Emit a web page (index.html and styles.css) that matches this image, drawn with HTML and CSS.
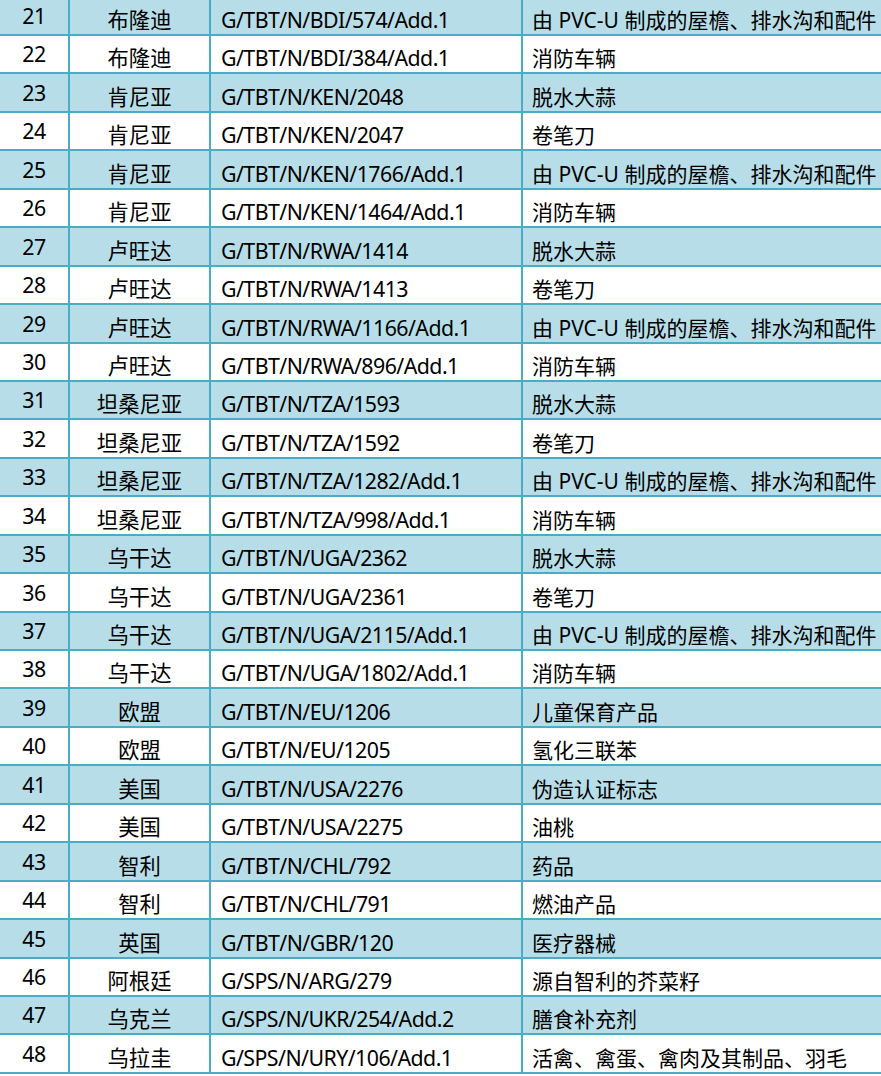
FILE: index.html
```html
<!DOCTYPE html>
<html lang="zh-CN">
<head>
<meta charset="utf-8">
<title>通报列表</title>
<link rel="stylesheet" href="styles.css">
</head>
<body>
<div class="sheet">
<table class="grid">
<colgroup><col class="c-no"><col class="c-member"><col class="c-symbol"><col class="c-product"></colgroup>
<tbody>
<tr class="alt"><td class="no">21</td><td class="member">布隆迪</td><td class="symbol">G/TBT/N/BDI/574/Add.1</td><td class="product">由 PVC-U 制成的屋檐、排水沟和配件</td></tr>
<tr><td class="no">22</td><td class="member">布隆迪</td><td class="symbol">G/TBT/N/BDI/384/Add.1</td><td class="product">消防车辆</td></tr>
<tr class="alt"><td class="no">23</td><td class="member">肯尼亚</td><td class="symbol">G/TBT/N/KEN/2048</td><td class="product">脱水大蒜</td></tr>
<tr><td class="no">24</td><td class="member">肯尼亚</td><td class="symbol">G/TBT/N/KEN/2047</td><td class="product">卷笔刀</td></tr>
<tr class="alt"><td class="no">25</td><td class="member">肯尼亚</td><td class="symbol">G/TBT/N/KEN/1766/Add.1</td><td class="product">由 PVC-U 制成的屋檐、排水沟和配件</td></tr>
<tr><td class="no">26</td><td class="member">肯尼亚</td><td class="symbol">G/TBT/N/KEN/1464/Add.1</td><td class="product">消防车辆</td></tr>
<tr class="alt"><td class="no">27</td><td class="member">卢旺达</td><td class="symbol">G/TBT/N/RWA/1414</td><td class="product">脱水大蒜</td></tr>
<tr><td class="no">28</td><td class="member">卢旺达</td><td class="symbol">G/TBT/N/RWA/1413</td><td class="product">卷笔刀</td></tr>
<tr class="alt"><td class="no">29</td><td class="member">卢旺达</td><td class="symbol">G/TBT/N/RWA/1166/Add.1</td><td class="product">由 PVC-U 制成的屋檐、排水沟和配件</td></tr>
<tr><td class="no">30</td><td class="member">卢旺达</td><td class="symbol">G/TBT/N/RWA/896/Add.1</td><td class="product">消防车辆</td></tr>
<tr class="alt"><td class="no">31</td><td class="member">坦桑尼亚</td><td class="symbol">G/TBT/N/TZA/1593</td><td class="product">脱水大蒜</td></tr>
<tr><td class="no">32</td><td class="member">坦桑尼亚</td><td class="symbol">G/TBT/N/TZA/1592</td><td class="product">卷笔刀</td></tr>
<tr class="alt"><td class="no">33</td><td class="member">坦桑尼亚</td><td class="symbol">G/TBT/N/TZA/1282/Add.1</td><td class="product">由 PVC-U 制成的屋檐、排水沟和配件</td></tr>
<tr><td class="no">34</td><td class="member">坦桑尼亚</td><td class="symbol">G/TBT/N/TZA/998/Add.1</td><td class="product">消防车辆</td></tr>
<tr class="alt"><td class="no">35</td><td class="member">乌干达</td><td class="symbol">G/TBT/N/UGA/2362</td><td class="product">脱水大蒜</td></tr>
<tr><td class="no">36</td><td class="member">乌干达</td><td class="symbol">G/TBT/N/UGA/2361</td><td class="product">卷笔刀</td></tr>
<tr class="alt"><td class="no">37</td><td class="member">乌干达</td><td class="symbol">G/TBT/N/UGA/2115/Add.1</td><td class="product">由 PVC-U 制成的屋檐、排水沟和配件</td></tr>
<tr><td class="no">38</td><td class="member">乌干达</td><td class="symbol">G/TBT/N/UGA/1802/Add.1</td><td class="product">消防车辆</td></tr>
<tr class="alt"><td class="no">39</td><td class="member">欧盟</td><td class="symbol">G/TBT/N/EU/1206</td><td class="product">儿童保育产品</td></tr>
<tr><td class="no">40</td><td class="member">欧盟</td><td class="symbol">G/TBT/N/EU/1205</td><td class="product">氢化三联苯</td></tr>
<tr class="alt"><td class="no">41</td><td class="member">美国</td><td class="symbol">G/TBT/N/USA/2276</td><td class="product">伪造认证标志</td></tr>
<tr><td class="no">42</td><td class="member">美国</td><td class="symbol">G/TBT/N/USA/2275</td><td class="product">油桃</td></tr>
<tr class="alt"><td class="no">43</td><td class="member">智利</td><td class="symbol">G/TBT/N/CHL/792</td><td class="product">药品</td></tr>
<tr><td class="no">44</td><td class="member">智利</td><td class="symbol">G/TBT/N/CHL/791</td><td class="product">燃油产品</td></tr>
<tr class="alt"><td class="no">45</td><td class="member">英国</td><td class="symbol">G/TBT/N/GBR/120</td><td class="product">医疗器械</td></tr>
<tr><td class="no">46</td><td class="member">阿根廷</td><td class="symbol">G/SPS/N/ARG/279</td><td class="product">源自智利的芥菜籽</td></tr>
<tr class="alt"><td class="no">47</td><td class="member">乌克兰</td><td class="symbol">G/SPS/N/UKR/254/Add.2</td><td class="product">膳食补充剂</td></tr>
<tr><td class="no">48</td><td class="member">乌拉圭</td><td class="symbol">G/SPS/N/URY/106/Add.1</td><td class="product">活禽、禽蛋、禽肉及其制品、羽毛</td></tr>
</tbody>
</table>
</div>
</body>
</html>
```

FILE: styles.css
```css
html, body {
  margin: 0;
  padding: 0;
  background: #ffffff;
}

.sheet {
  width: 881px;
  height: 1076px;
  overflow: hidden;
}

.grid {
  border-collapse: collapse;
  table-layout: fixed;
  width: 922px;
  margin-top: -3.44px;
  font-family: "Noto Sans", "Noto Sans CJK SC", sans-serif;
  font-size: 21.33px;
  color: #000000;
}

.c-no { width: 69px; }
.c-member { width: 141px; }
.c-symbol { width: 312px; }
.c-product { width: 400px; }

.grid tr {
  height: 38.44px;
}

.grid tr.alt {
  background: #b7dee8;
}

.grid td {
  padding: 0 0 2px 0;
  border-right: 2px solid #4bacc6;
  border-bottom: 2px solid #4bacc6;
  white-space: nowrap;
  overflow: hidden;
  line-height: 24px;
  vertical-align: bottom;
}

.grid td.no {
  text-align: center;
  padding-bottom: 6px;
  letter-spacing: -0.4px;
}

.grid td.member {
  text-align: center;
}

.grid td.symbol {
  padding-left: 10px;
  letter-spacing: -0.55px;
}

.grid td.product {
  padding-left: 9px;
  font-size: 21px;
  border-right: none;
}
```
